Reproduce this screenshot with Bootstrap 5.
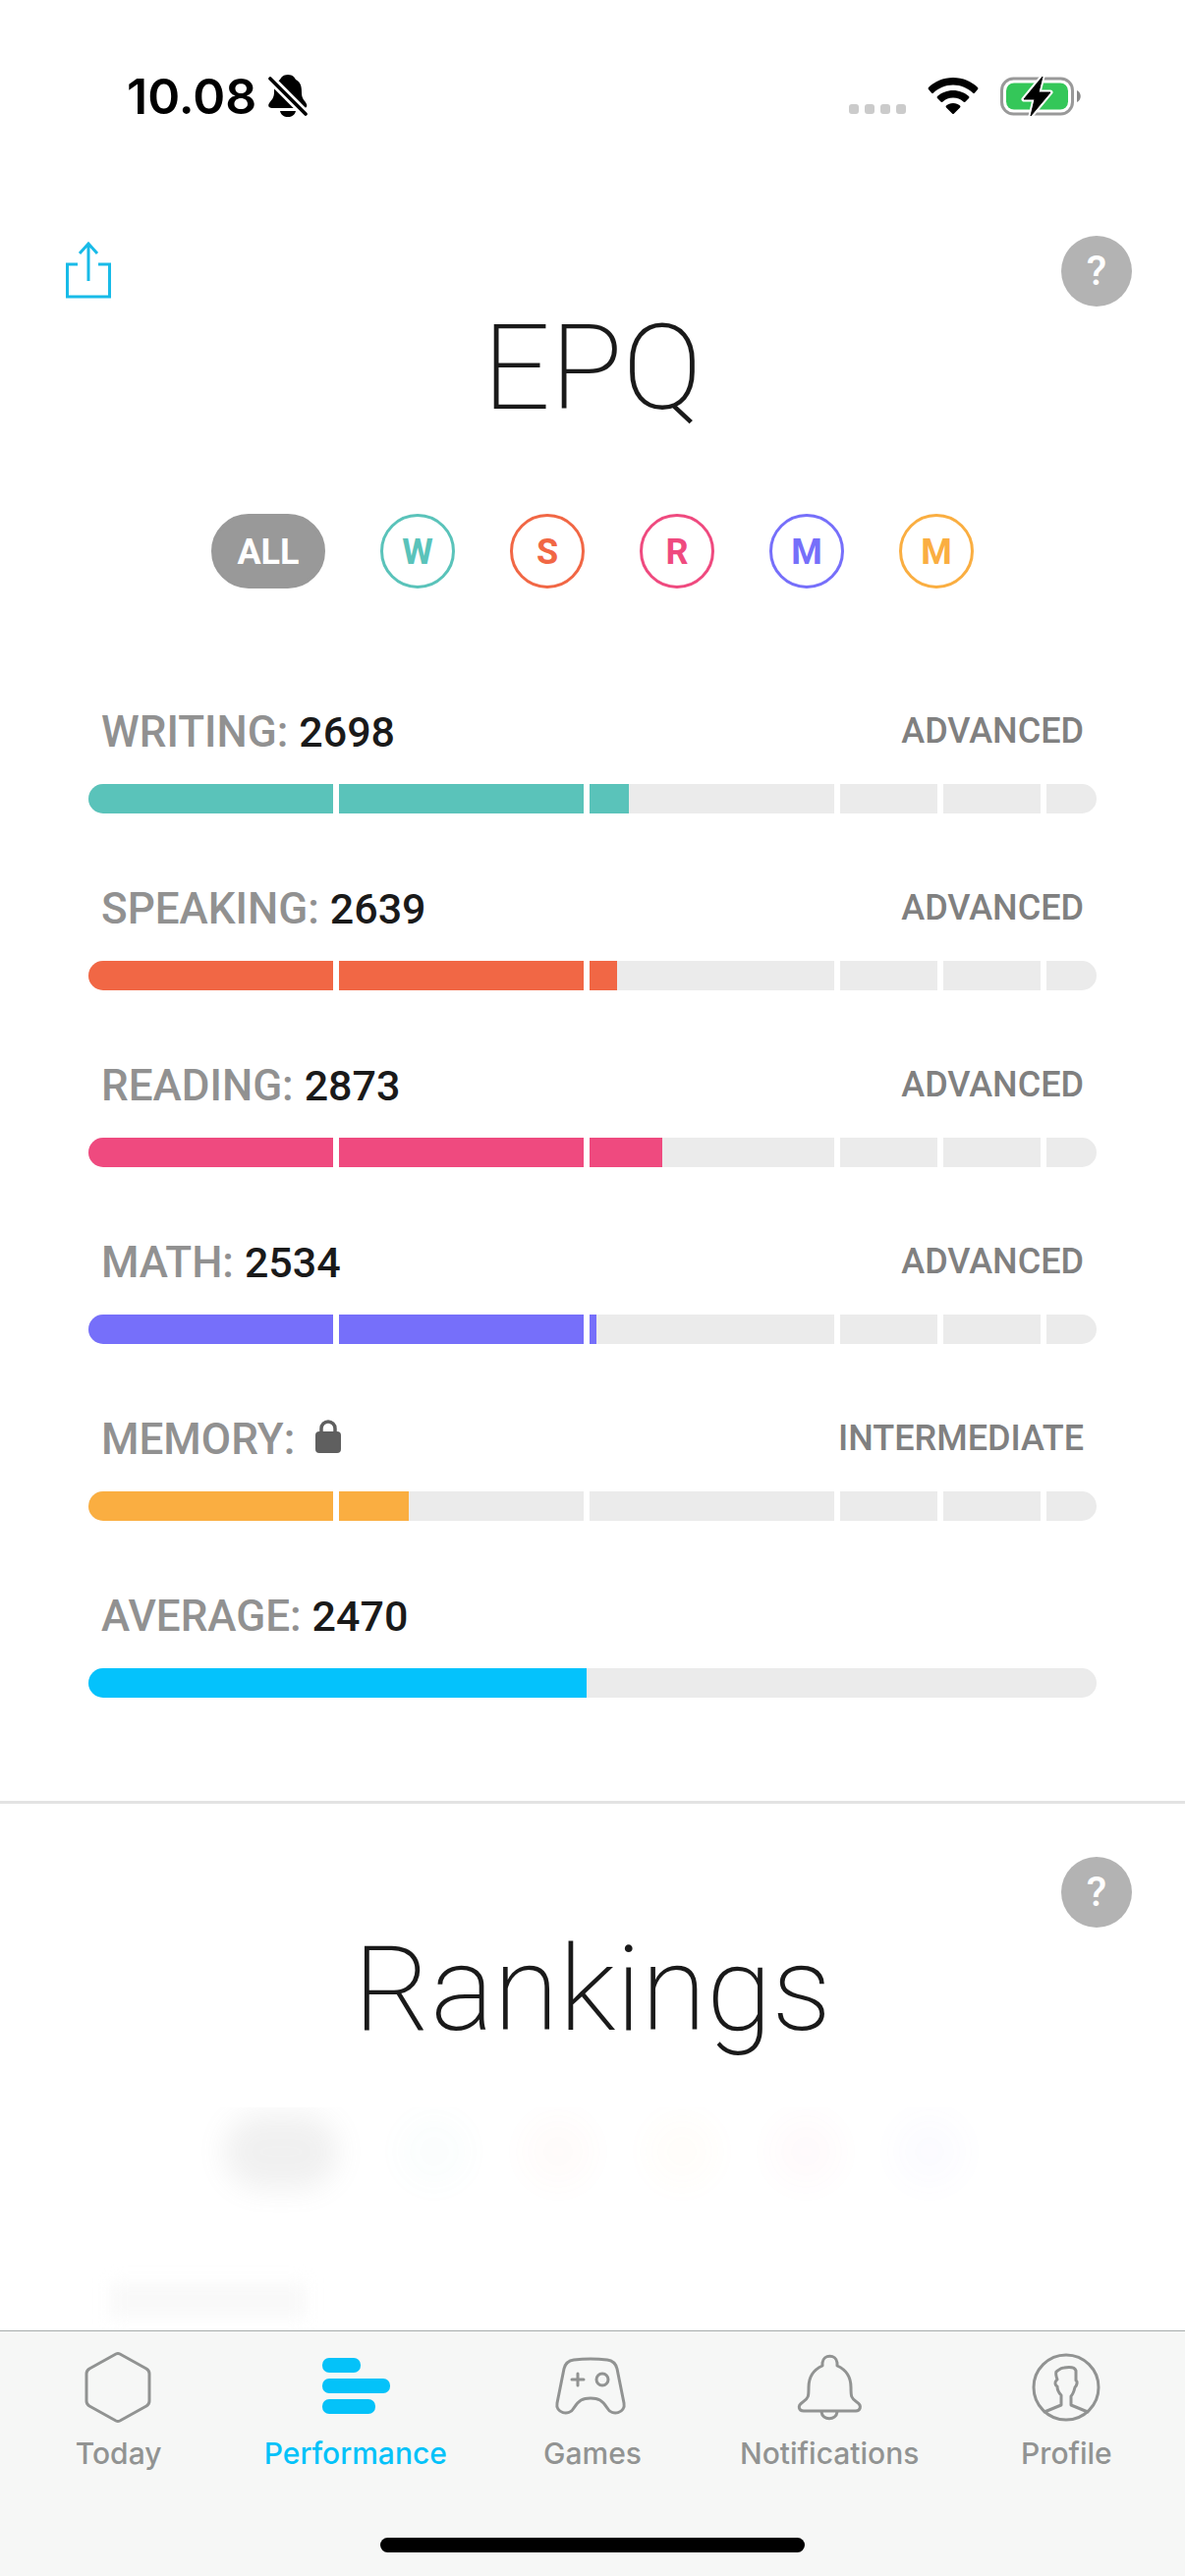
<!DOCTYPE html>
<html lang="en">
<head>
<meta charset="utf-8">
<meta name="viewport" content="width=device-width, initial-scale=1">
<title>Performance</title>
<link rel="stylesheet" href="https://cdn.jsdelivr.net/npm/bootstrap@5.3.0/dist/css/bootstrap.min.css">
<script src="https://cdn.jsdelivr.net/npm/bootstrap@5.3.0/dist/js/bootstrap.bundle.min.js"></script>
<style>
  body { font-family: Roboto, "Liberation Sans", sans-serif; color: #1a1a1a; background: #fff; }
  svg { display: block; }

  .status-bar { font-family: Inter, sans-serif; height: 198px; padding: 66px 106px 0 129px; color: #000; }
  .clock { font-size: 50px; font-weight: 600; line-height: 64px; }
  .bell-off { margin-left: 12px; }
  .status-icons { height: 64px; }
  .wifi-icon { margin: 0 22px; }
  .signal-dots { gap: 6px; padding-top: 26px; }
  .signal-dots i { width: 10px; height: 10px; border-radius: 3px; background: #cbcbcb; }

  .section-tools { margin: 42px 54px 0 66px; height: 75px; }
  .help-btn { width: 72px; height: 72px; padding: 0; border: 0; border-radius: 50%; background: #b3b3b3; color: #fff; font-size: 42px; font-weight: 500; line-height: 72px; }
  .plain-btn { border: 0; background: none; padding: 6px 0 0; }
  .section-title { font-size: 121px; font-weight: 200; line-height: 120px; margin: 0; }

  .filters { gap: 56px; padding-top: 88px; }
  .filter-btn { width: 76px; height: 76px; padding: 0; border: 3px solid; border-radius: 38px; background: none; font-size: 36px; font-weight: 700; line-height: 72px; text-align: center; }
  .filter-all { width: 116px; background: #999; border-color: #999; color: #fff; }
  .c-writing { color: #5ac3ba; } .c-speaking { color: #f16745; } .c-reading { color: #ef4a7f; }
  .c-math { color: #766ffa; } .c-memory { color: #faae41; } .c-average { color: #04c2fc; }

  .skill-list { padding: 114px 90px 40px; }
  .skill { height: 180px; }
  .skill-head { padding: 0 13px; height: 85px; }
  .skill-name { font-size: 44px; font-weight: 500; line-height: 64px; color: #919191; }
  .skill-name strong { font-size: 43px; font-weight: 500; color: #1a1a1a; }
  .skill-level { font-size: 36px; font-weight: 500; line-height: 62px; color: #808080; }
  .lock-icon { margin: 12px 0 0 20px; }
  .meter { position: relative; height: 30px; border-radius: 15px; overflow: hidden; background: #ebebeb; }
  .meter-fill { height: 100%; background: currentColor; }
  .meter-ticks { position: absolute; inset: 0; display: grid; grid-template-columns: 249fr 249fr 249fr 99fr 99fr 51fr; column-gap: 6px; }
  .meter-ticks span { box-shadow: 6px 0 #fff; }

  .rankings { border-top: 3px solid #e3e3e3; }
  .rankings .section-tools { margin-top: 54px; }
  .locked { height: 236px; margin-top: 60px; overflow: hidden; }
  .locked-row { filter: blur(14px); opacity: .12; gap: 50px; padding: 7px 0 0 228px; }
  .locked-row i { width: 76px; height: 76px; border-radius: 50%; background: currentColor; opacity: .2; }
  .locked-row .ghost-all { width: 116px; margin-right: 10px; border-radius: 38px; background: #888; opacity: 1; }
  .ghost-line { width: 200px; height: 36px; margin: 96px 0 0 112px; background: #f9f9f9; filter: blur(8px); }

  .tab-bar { background: #f6f7f6; border-top: 1px solid #a7adac; height: 250px; }
  .tab-link { flex: 1 1 0; padding-top: 16px; color: #919392; text-decoration: none; font-family: Inter, sans-serif; font-size: 30px; font-weight: 500; line-height: 36px; }
  .tab-link svg { width: 84px; height: 84px; margin-bottom: 6px; fill: none; stroke: currentColor; stroke-width: 3; stroke-linejoin: round; stroke-linecap: round; }
  .tab-link.active { color: #04c2f9; }
  .home-bar { width: 432px; height: 15px; border-radius: 8px; background: #000; margin: 0 auto 24px; }
</style>
</head>
<body class="d-flex flex-column min-vh-100">

<header class="status-bar d-flex justify-content-between align-items-start">
  <div class="d-flex align-items-center">
    <span class="clock">10.08</span>
    <svg class="bell-off" width="40" height="44" viewBox="0 0 40 44" aria-label="Silent">
      <path d="M20 0c5 0 7 3 8 5 6 3 6 9 6 14 0 6 4 8 5 11 1 3-1 4-3 4H4c-3 0-5-2-3-5 2-3 5-5 5-11 0-5 1-10 6-13 1-2 3-5 8-5zM12 37h16c-1 4-4 6-8 6s-7-2-8-6z"/>
      <path d="M2 4l36 36" stroke="#fff" stroke-width="9"/>
      <path d="M2 4l36 36" stroke="#000" stroke-width="3.6" stroke-linecap="round"/>
    </svg>
  </div>
  <div class="status-icons d-flex align-items-center">
    <div class="signal-dots d-flex"><i></i><i></i><i></i><i></i></div>
    <svg class="wifi-icon" width="52" height="38" viewBox="0 0 52 38" aria-label="Wi-Fi">
      <path d="M26 0C16 0 7 4 1 10q-1 1 0 2l3 3.500q1 1 2 0C11 11 18 7.500 26 7.500S41 11 46 15.500q1 1 2 0l3-3.500q1-1 0-2C45 4 36 0 26 0zM26 13c-6 0-12 2.500-16 6q-1 1 0 2l3.500 3.500q1 1 2 0c3-2.500 6-4 10.500-4s7.500 1.500 10.500 4q1 1 2 0L42 21q1-1 0-2c-4-3.500-10-6-16-6zM26 26c-3 0-5 1-7 2.500q-1 1 0 2l6 6q1 1 2 0l6-6q1-1 0-2C31 27 29 26 26 26z"/>
    </svg>
    <svg width="82" height="42" viewBox="0 0 82 42" aria-label="Charging">
      <rect x="1.500" y="3" width="72" height="36" rx="12" fill="none" stroke="#999" stroke-width="3"/>
      <path d="M78 15c5 2 5 10 0 12z" fill="#888"/>
      <rect x="6" y="7.500" width="63" height="27" rx="8" fill="#34c759"/>
      <path d="M43 1L24 24h11l-4 17 20-24H39z" stroke="#fff" stroke-width="5" stroke-linejoin="round"/>
      <path d="M43 1L24 24h11l-4 17 20-24H39z" stroke="#000" stroke-linejoin="round"/>
    </svg>
  </div>
</header>

<main class="flex-grow-1">
  <section>
    <div class="section-tools d-flex justify-content-between align-items-start">
      <button class="plain-btn" type="button" aria-label="Share">
        <svg width="48" height="60" viewBox="0 0 48 60" fill="none" stroke="#18bbe8" stroke-width="3"><path d="M13 23H2.500v33h43V23H34M24 40V3M15 12l9-10 9 10"/></svg>
      </button>
      <button class="help-btn" type="button" aria-label="About EPQ">?</button>
    </div>
    <h1 class="section-title text-center">EPQ</h1>
    <div class="filters d-flex justify-content-center">
      <button class="filter-btn filter-all" type="button">ALL</button>
      <button class="filter-btn c-writing" type="button">W</button>
      <button class="filter-btn c-speaking" type="button">S</button>
      <button class="filter-btn c-reading" type="button">R</button>
      <button class="filter-btn c-math" type="button">M</button>
      <button class="filter-btn c-memory" type="button">M</button>
    </div>
    <div class="skill-list">
      <div class="skill c-writing">
        <div class="skill-head d-flex justify-content-between"><span class="skill-name">WRITING: <strong>2698</strong></span><span class="skill-level">ADVANCED</span></div>
        <div class="meter"><div class="meter-fill" style="width:53.6%"></div><div class="meter-ticks"><span></span><span></span><span></span><span></span><span></span></div></div>
      </div>
      <div class="skill c-speaking">
        <div class="skill-head d-flex justify-content-between"><span class="skill-name">SPEAKING: <strong>2639</strong></span><span class="skill-level">ADVANCED</span></div>
        <div class="meter"><div class="meter-fill" style="width:52.4%"></div><div class="meter-ticks"><span></span><span></span><span></span><span></span><span></span></div></div>
      </div>
      <div class="skill c-reading">
        <div class="skill-head d-flex justify-content-between"><span class="skill-name">READING: <strong>2873</strong></span><span class="skill-level">ADVANCED</span></div>
        <div class="meter"><div class="meter-fill" style="width:56.9%"></div><div class="meter-ticks"><span></span><span></span><span></span><span></span><span></span></div></div>
      </div>
      <div class="skill c-math">
        <div class="skill-head d-flex justify-content-between"><span class="skill-name">MATH: <strong>2534</strong></span><span class="skill-level">ADVANCED</span></div>
        <div class="meter"><div class="meter-fill" style="width:50.4%"></div><div class="meter-ticks"><span></span><span></span><span></span><span></span><span></span></div></div>
      </div>
      <div class="skill c-memory">
        <div class="skill-head d-flex justify-content-between"><span class="skill-name d-flex">MEMORY:
          <svg class="lock-icon" width="28" height="36" viewBox="0 0 28 36" aria-label="Locked"><rect x="1" y="12" width="26" height="22" rx="4" fill="#5f5f5f"/><path d="M7 14V9a7 7 0 0 1 14 0v5" fill="none" stroke="#5f5f5f" stroke-width="3.500"/></svg></span><span class="skill-level">INTERMEDIATE</span></div>
        <div class="meter"><div class="meter-fill" style="width:31.8%"></div><div class="meter-ticks"><span></span><span></span><span></span><span></span><span></span></div></div>
      </div>
      <div class="skill c-average">
        <div class="skill-head"><span class="skill-name">AVERAGE: <strong>2470</strong></span></div>
        <div class="meter"><div class="meter-fill" style="width:49.4%"></div></div>
      </div>
    </div>
  </section>

  <section class="rankings">
    <div class="section-tools d-flex justify-content-end"><button class="help-btn" type="button" aria-label="About rankings">?</button></div>
    <h2 class="section-title text-center">Rankings</h2>
    <div class="locked" aria-hidden="true">
      <div class="locked-row d-flex"><i class="ghost-all"></i><i class="c-writing"></i><i class="c-speaking"></i><i class="c-memory"></i><i class="c-reading"></i><i class="c-math"></i></div>
      <div class="ghost-line"></div>
    </div>
  </section>
</main>

<footer class="tab-bar fixed-bottom d-flex flex-column justify-content-between">
  <nav class="d-flex" aria-label="Main">
    <a class="tab-link d-flex flex-column align-items-center" href="#"><svg viewBox="0 0 84 84"><path d="M39 7q2-1 4 0l27 15q3 2 3 5v28q0 3-3 5L43 75q-2 1-4 0L12 60q-3-2-3-5V27q0-3 3-5z"/></svg>Today</a>
    <a class="tab-link active d-flex flex-column align-items-center" href="#" aria-current="page"><svg viewBox="0 0 84 84"><g fill="currentColor" stroke="none"><rect x="8" y="11" width="39" height="15" rx="7"/><rect x="8" y="32" width="69" height="15" rx="7"/><rect x="8" y="53" width="54" height="15" rx="7"/></g></svg>Performance</a>
    <a class="tab-link d-flex flex-column align-items-center" href="#"><svg viewBox="0 0 84 84"><path d="M23 13q17-2 34 0 8 1 10 9l7 35c2 10-12 14-17 5C52 54 48 52 40 52s-12 2-17 10c-5 9-19 5-17-5l7-35q2-8 10-9zM27 27v12M21 33h12"/><circle cx="52" cy="33" r="6"/></svg>Games</a>
    <a class="tab-link d-flex flex-column align-items-center" href="#"><svg viewBox="0 0 84 84"><path d="M35 19v-3c1-9 14-9 15 0v3c9 4 14 12 14 22 0 9 0 11 6 15 6 4 3 9-1 9H16c-5 0-7-5-1-9s6-6 6-15c0-10 5-18 14-22zM34 66c1 9 15 9 16 0"/></svg>Notifications</a>
    <a class="tab-link d-flex flex-column align-items-center" href="#"><svg viewBox="0 0 84 84"><circle cx="42" cy="41" r="33"/><path d="M20 66l17-7V49c-3-3-4-6-4-9-2-1-3-4-1-6l1-1c-1-3-2-6-1-8 2-1 4-4 8-4 6-1 11 0 12 3v10c2 1 1 5-1 7-1 4-2 7-4 9v9l17 7"/></svg>Profile</a>
  </nav>
  <div class="home-bar"></div>
</footer>
</body>
</html>
